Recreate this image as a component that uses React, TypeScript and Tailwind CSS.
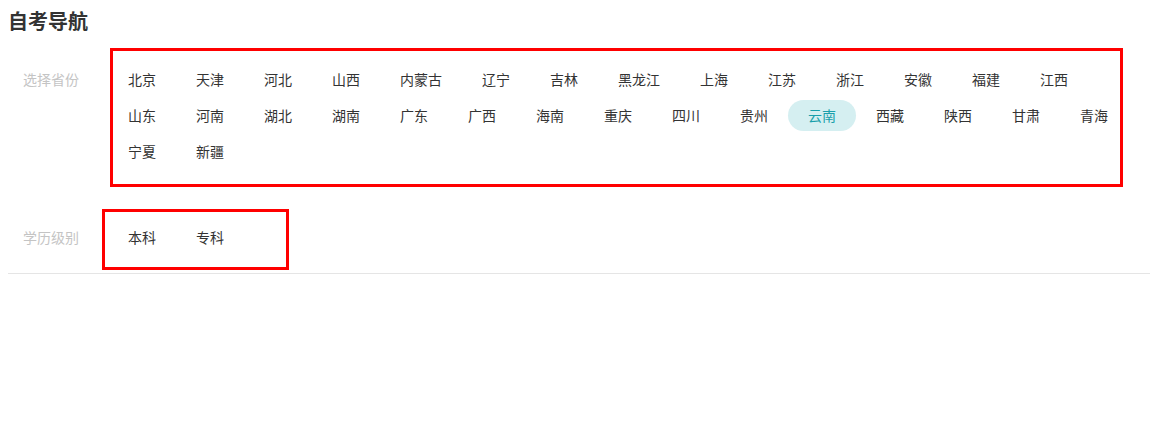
import { useState } from 'react';

const PROVINCES = [
  '北京', '天津', '河北', '山西', '内蒙古', '辽宁', '吉林', '黑龙江', '上海', '江苏',
  '浙江', '安徽', '福建', '江西', '山东', '河南', '湖北', '湖南', '广东', '广西',
  '海南', '重庆', '四川', '贵州', '云南', '西藏', '陕西', '甘肃', '青海', '宁夏', '新疆',
];

const LEVELS = ['本科', '专科'];

function Item({ label, active, onClick }: { label: string; active?: boolean; onClick?: () => void }) {
  return (
    <button
      onClick={onClick}
      className={`mb-[5px] h-[31px] rounded-full px-5 text-sm leading-[31px] ${
        active ? 'bg-[#d5eff1] text-[#1a9fab]' : 'text-[#333]'
      }`}
    >
      {label}
    </button>
  );
}

export default function App() {
  const [province, setProvince] = useState('云南');
  const [level, setLevel] = useState('');

  return (
    <div
      className="relative h-[434px] w-[1150px] bg-white pl-2"
      style={{ fontFamily: '"Noto Sans CJK SC", "Noto Sans", sans-serif' }}
    >
      <h1 className="text-[20px] font-bold leading-[42px] text-[#333]">自考导航</h1>

      <div className="mt-[22px] flex">
        <div className="w-[100px] shrink-0 pl-[15px] text-sm leading-[31px] text-[#c4c4c4]">选择省份</div>
        <div className="flex flex-1 flex-wrap">
          {PROVINCES.map((p) => (
            <Item key={p} label={p} active={p === province} onClick={() => setProvince(p)} />
          ))}
        </div>
      </div>

      <div className="mt-[50px] flex border-b border-[#e5e5e5] pb-[15px]">
        <div className="w-[100px] shrink-0 pl-[15px] text-sm leading-[31px] text-[#c4c4c4]">学历级别</div>
        <div className="flex flex-1 flex-wrap">
          {LEVELS.map((l) => (
            <Item key={l} label={l} active={l === level} onClick={() => setLevel(l)} />
          ))}
        </div>
      </div>

      {/* annotation boxes */}
      <div className="pointer-events-none absolute left-[110px] top-[48px] h-[139px] w-[1013px] border-[3px] border-[#ff0000]" />
      <div className="pointer-events-none absolute left-[102px] top-[209px] h-[61px] w-[187px] border-[3px] border-[#ff0000]" />
    </div>
  );
}
